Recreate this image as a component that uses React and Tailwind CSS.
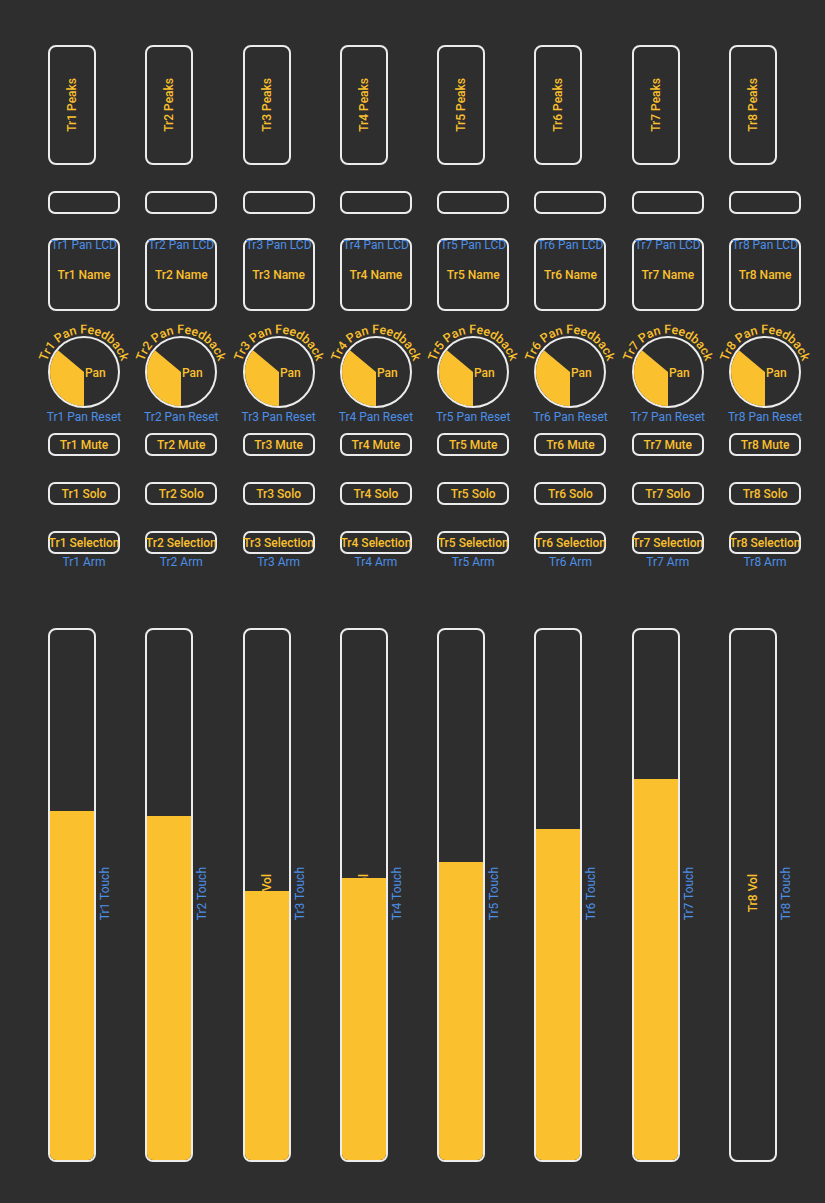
import React from "react";

const YELLOW = "#fbc02d";
const fills = [349, 344, 269, 282, 298, 331, 381, 0];

function Knob({ n }) {
  const cx = 36;
  const cy = 36;
  const r = 34;
  const a = (310 * Math.PI) / 180;
  const ex = cx + r * Math.sin(a);
  const ey = cy - r * Math.cos(a);
  const id = `arc${n}`;
  return (
    <svg width="72" height="72" viewBox="0 0 72 72" className="block overflow-visible">
      <defs>
        <path id={id} d="M -2.5 36 A 38.5 38.5 0 0 1 74.5 36" fill="none" />
      </defs>
      <text fill={YELLOW} fontSize="12.4" fontWeight="500" style={{ fontFamily: "Roboto, sans-serif" }}>
        <textPath href={`#${id}`} startOffset="50%" textAnchor="middle">
          {`Tr${n} Pan Feedback`}
        </textPath>
      </text>
      <circle cx={cx} cy={cy} r="35" fill="#2e2e2e" stroke="#ececec" strokeWidth="2" />
      <path d={`M ${cx} ${cy} L ${cx} ${cy + r} A ${r} ${r} 0 0 1 ${ex} ${ey} Z`} fill={YELLOW} />
      <text x="37" y="40.5" fill={YELLOW} fontSize="12" fontWeight="500" style={{ fontFamily: "Roboto, sans-serif" }}>
        Pan
      </text>
    </svg>
  );
}

function Btn({ label, className = "" }) {
  return (
    <div
      className={`w-[72px] h-[23px] border-2 border-[#ececec] rounded-[7px] flex items-center justify-center whitespace-nowrap text-[#fbc02d] font-medium ${className}`}
    >
      {label}
    </div>
  );
}

function Strip({ n, fill }) {
  return (
    <div className="w-[97.3px] shrink-0 flex flex-col items-start">
      <div className="w-[48px] h-[120px] border-2 border-[#ececec] rounded-[8px] flex items-center justify-center">
        <span className="[writing-mode:vertical-rl] rotate-180 whitespace-nowrap text-[#fbc02d] font-medium">
          {`Tr${n} Peaks`}
        </span>
      </div>
      <div className="mt-[26px] w-[72px] h-[23px] border-2 border-[#ececec] rounded-[7px]" />
      <div className="mt-[24px] w-[72px] h-[73px] border-2 border-[#ececec] rounded-[8px] relative flex items-center justify-center">
        <div className="absolute -top-[2px] left-0 right-0 flex justify-center whitespace-nowrap text-[#4c8fe8]">
          {`Tr${n} Pan LCD`}
        </div>
        <span className="whitespace-nowrap text-[#fbc02d] font-medium">{`Tr${n} Name`}</span>
      </div>
      <div className="mt-[25px]">
        <Knob n={n} />
      </div>
      <div className="mt-[2px] w-[72px] flex justify-center whitespace-nowrap text-[#4c8fe8]">
        {`Tr${n} Pan Reset`}
      </div>
      <Btn label={`Tr${n} Mute`} className="mt-[9px]" />
      <Btn label={`Tr${n} Solo`} className="mt-[26px]" />
      <Btn label={`Tr${n} Selection`} className="mt-[26px]" />
      <div className="mt-[1px] w-[72px] flex justify-center whitespace-nowrap text-[#4c8fe8]">
        {`Tr${n} Arm`}
      </div>
      <div className="mt-[59px] flex items-stretch">
        <div className="w-[48px] h-[534px] border-2 border-[#ececec] rounded-[8px] relative overflow-hidden">
          <div className="absolute inset-0 flex items-center justify-center pb-[4px]">
            <span className="[writing-mode:vertical-rl] rotate-180 whitespace-nowrap text-[#fbc02d] font-medium">
              {`Tr${n} Vol`}
            </span>
          </div>
          <div className="absolute left-0 right-0 bottom-0 bg-[#fbc02d]" style={{ height: fill }} />
        </div>
        <div className="w-[18px] flex items-center justify-center pb-[3px]">
          <span className="[writing-mode:vertical-rl] rotate-180 whitespace-nowrap text-[#4c8fe8]">
            {`Tr${n} Touch`}
          </span>
        </div>
      </div>
    </div>
  );
}

export default function App() {
  return (
    <div className="w-[825px] h-[1203px] bg-[#2e2e2e] overflow-hidden font-[Roboto,sans-serif] text-[12px] leading-[14px]">
      <div className="flex pl-[48px] pt-[45px]">
        {fills.map((f, i) => (
          <Strip key={i} n={i + 1} fill={f} />
        ))}
      </div>
    </div>
  );
}
